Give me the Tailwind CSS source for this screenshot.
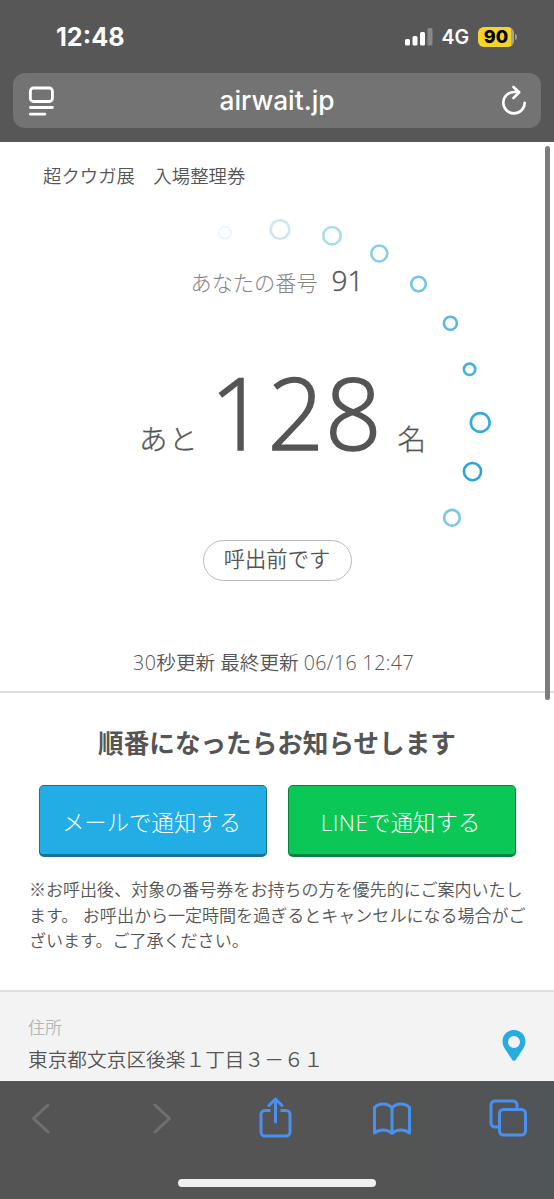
<!DOCTYPE html>
<html lang="ja">
<head>
<meta charset="utf-8">
<title>airwait.jp</title>
<script src="https://cdn.jsdelivr.net/npm/@tailwindcss/browser@4"></script>
</head>
<body class="bg-white">
<div class="relative flex h-[1199px] w-[554px] flex-col overflow-hidden bg-white font-['Open_Sans','Noto_Sans_CJK_JP',sans-serif] font-[350] text-[#555]">
  <header class="flex h-[142px] shrink-0 flex-col bg-[#575757] text-white">
    <div class="flex h-[73px] items-center justify-between pr-[37px] pl-[56px] font-['Inter',sans-serif]">
      <span class="pt-[3px] text-[25.2px] leading-none font-bold">12:48</span>
      <div class="flex items-center">
        <svg class="mr-[8px] h-[18px] w-[28px]" viewBox="0 0 28 18"><g fill="#fff"><rect y="11" width="5" height="6.5" rx="1.5"/><rect x="7.5" y="8" width="5" height="9.5" rx="1.5"/><rect x="15" y="4" width="5" height="13.5" rx="1.5"/><rect x="22.5" y="0" width="5" height="17.5" rx="1.5" opacity=".3"/></g></svg>
        <span class="mr-[9px] pt-[3px] text-[19.5px] leading-none font-semibold">4G</span>
        <div class="flex h-[20px] w-[36px] items-center justify-center rounded-[6px] bg-linear-to-r from-[#f7d327] from-93% to-[#a9a38a] to-93% pt-px text-[18px] leading-none font-extrabold text-black">90</div>
        <div class="ml-[1px] h-[6px] w-[2px] rounded-r-full bg-[#999]"></div>
      </div>
    </div>
    <div class="mx-[13px] flex h-[55px] items-center justify-between rounded-[12px] bg-[#737373] pr-[13px] pl-[15px]">
      <svg class="h-[32px] w-[28px]" viewBox="0 0 28 32" fill="none" stroke="#fff" stroke-width="2.8" stroke-linecap="round"><rect x="2.4" y="3" width="22" height="13.5" rx="3"/><path d="M2.4 22.5h22M2.4 29.2h14.5"/></svg>
      <span class="pt-[2px] pr-[2px] font-['Inter',sans-serif] text-[26.3px] leading-none font-medium">airwait.jp</span>
      <svg class="h-[32px] w-[28px]" viewBox="0 0 28 32" fill="none" stroke="#fff" stroke-width="2.6" stroke-linecap="round" stroke-linejoin="round"><path d="M24.7 17.7A10.7 10.7 0 1 1 14 7h5M13.5 2l5.7 5.3-5.7 5.7"/></svg>
    </div>
  </header>

  <main class="flex h-[551px] shrink-0 flex-col border-b-2 border-[#ddd]">
    <div class="flex h-[68px] items-center pt-px pl-[43px] text-[18.4px] leading-none">超クウガ展　入場整理券</div>
    <div class="flex h-[144px] items-center justify-center pb-[4px]">
      <div class="flex items-baseline gap-[14px] leading-none"><span class="text-[21.2px] text-[#858585] font-light">あなたの番号</span><span class="text-[28px] font-light [-webkit-text-stroke:0.4px_#555]">91</span></div>
    </div>
    <div class="flex h-[120px] items-baseline justify-center pt-[8px] pl-[11px] leading-none">
      <span class="text-[28.5px] font-light tracking-[1.5px] [-webkit-text-stroke:0.3px_#555]">あと</span>
      <span class="ml-[11px] text-[99px] font-light tracking-[1px] [-webkit-text-stroke:1.6px_#555]">128</span>
      <span class="ml-[15px] text-[28.5px] font-light [-webkit-text-stroke:0.3px_#555]">名</span>
    </div>
    <div class="mx-auto mt-[66px] flex h-[41px] w-[149px] items-center justify-center rounded-full border border-[#bbb] pb-[3px] text-[21.3px] leading-none">呼出前です</div>
    <div class="mt-[72px] pr-[7px] text-center text-[19.6px] leading-[20px] whitespace-nowrap"><span class="tracking-[.5px]">30</span>秒更新 最終更新 <span class="tracking-[.4px]">06/16 12:47</span></div>
  </main>

  <section class="flex h-[297px] shrink-0 flex-col">
    <h1 class="mt-[38px] text-center text-[25.6px] leading-[26px] font-bold">順番になったらお知らせします</h1>
    <div class="mt-[28px] flex justify-center gap-[21px] text-[22.4px] leading-none text-white">
      <button class="h-[72px] w-[228px] rounded-[5px] border border-b-[3px] border-[#17729b] bg-[#22ade5] pt-[6px] pr-[2px] font-light">メールで通知する</button>
      <button class="h-[72px] w-[228px] rounded-[5px] border border-b-[3px] border-[#07813b] bg-[#0bc856] pt-[6px] pr-[2px] font-light"><span class="tracking-[.5px]">LINE</span>で通知する</button>
    </div>
    <p class="mt-[20px] ml-[29px] text-[17.05px] leading-[25.5px] whitespace-nowrap">※お呼出後、対象の番号券をお持ちの方を優先的にご案内いたし<br>ます。 お呼出から一定時間を過ぎるとキャンセルになる場合がご<br>ざいます。ご了承ください。</p>
  </section>

  <section class="flex h-[91px] shrink-0 items-start justify-between border-t-2 border-[#ddd] bg-[#f3f3f3] pr-[28px] pl-[28px]">
    <div>
      <div class="mt-[27px] text-[17px] leading-[18px] text-[#b5b5b5]">住所</div>
      <div class="mt-[13px] text-[19.7px] leading-[20px]">東京都文京区後楽１丁目３－６１</div>
    </div>
    <svg class="mt-[38px] h-[31px] w-[24px]" viewBox="0 0 24 31"><path fill="#28abe0" fill-rule="evenodd" d="M12 0C5.4 0 .5 5 .5 11.3c0 3 .9 5.1 2.5 7.7l7.3 10.9c.9 1.2 2.5 1.2 3.4 0L21 19c1.600-2.600 2.500-4.700 2.500-7.700C23.500 5 18.600 0 12 0Zm0 6a6 6 0 1 1 0 12 6 6 0 0 1 0-12Z"/></svg>
  </section>

  <footer class="flex h-[118px] shrink-0 flex-col items-center justify-between bg-linear-to-r from-[#545454] from-70% to-[#505558] pb-[12px]">
    <div class="flex h-[76px] w-full items-center pl-[31px]">
      <svg class="mb-[2px] h-[32px] w-[20px]" viewBox="0 0 20 32" fill="none" stroke="#707070" stroke-width="3" stroke-linecap="round" stroke-linejoin="round"><path d="M17 3 2.500 16.500 17 30"/></svg>
      <svg class="mb-[2px] ml-[101px] h-[32px] w-[20px]" viewBox="0 0 20 32" fill="none" stroke="#707070" stroke-width="3" stroke-linecap="round" stroke-linejoin="round"><path d="M3 3l14.500 13.500L3 30"/></svg>
      <svg class="mb-[5px] ml-[86px] h-[42px] w-[34px]" viewBox="0 0 34 42" fill="none" stroke="#4b90ee" stroke-width="3" stroke-linecap="round" stroke-linejoin="round"><path stroke-linecap="butt" d="M12.500 14.500H7a4 4 0 0 0-4 4V36a4 4 0 0 0 4 4h21a4 4 0 0 0 4-4V18.500a4 4 0 0 0-4-4h-5.500"/><path d="M17.500 26V3.500M11 9.500l6.500-6.500L24 9.500"/></svg>
      <svg class="ml-[80px] h-[36px] w-[40px]" viewBox="0 0 40 36" fill="none" stroke="#4b90ee" stroke-width="3" stroke-linejoin="round"><path d="M20 7v25.500M20 7C16 1.700 7 1.700 2.500 6.500V32c5-4 12.500-4 17.500.5C25 28 32.500 28 37.500 32V6.500C33 1.700 24 1.700 20 7Z"/></svg>
      <svg class="mb-[2px] ml-[77px] h-[38px] w-[38px]" viewBox="0 0 38 38" fill="none" stroke="#4b90ee" stroke-width="3"><path d="M10 28H6a4 4 0 0 1-4-4V6a4 4 0 0 1 4-4h18a4 4 0 0 1 4 4v4"/><rect x="10.500" y="10.500" width="26" height="25.500" rx="4"/></svg>
    </div>
    <div class="h-[8px] w-[198px] rounded-full bg-[#f0eeee]"></div>
  </footer>

  <!-- ring of progress dots -->
  <svg class="pointer-events-none absolute top-[142px] left-0 h-[551px] w-[554px]" viewBox="0 142 554 551" fill="none" stroke-width="2.600">
    <circle cx="225" cy="232.800" r="6" stroke="#e9f5fa" stroke-width="2"/>
    <circle cx="280" cy="229.500" r="9.300" stroke="#c9e8f3"/>
    <circle cx="332" cy="235.700" r="8.700" stroke="#a9ddee"/>
    <circle cx="379.300" cy="253.500" r="8" stroke="#86cee9"/>
    <circle cx="418.500" cy="284" r="7.300" stroke="#72c5e8"/>
    <circle cx="450.400" cy="323.300" r="6.500" stroke="#58b9df"/>
    <circle cx="469.600" cy="369.300" r="5.700" stroke="#48afe0"/>
    <circle cx="480.200" cy="422.500" r="9.400" stroke="#35aadb"/>
    <circle cx="472.500" cy="471.600" r="8.600" stroke="#2fa3da"/>
    <circle cx="452" cy="517.800" r="7.900" stroke="#78c7ea"/>
  </svg>
  <div class="absolute top-[146px] left-[545px] h-[554px] w-[5px] rounded-full bg-[#7c7c7c]"></div>
</div>
</body>
</html>
